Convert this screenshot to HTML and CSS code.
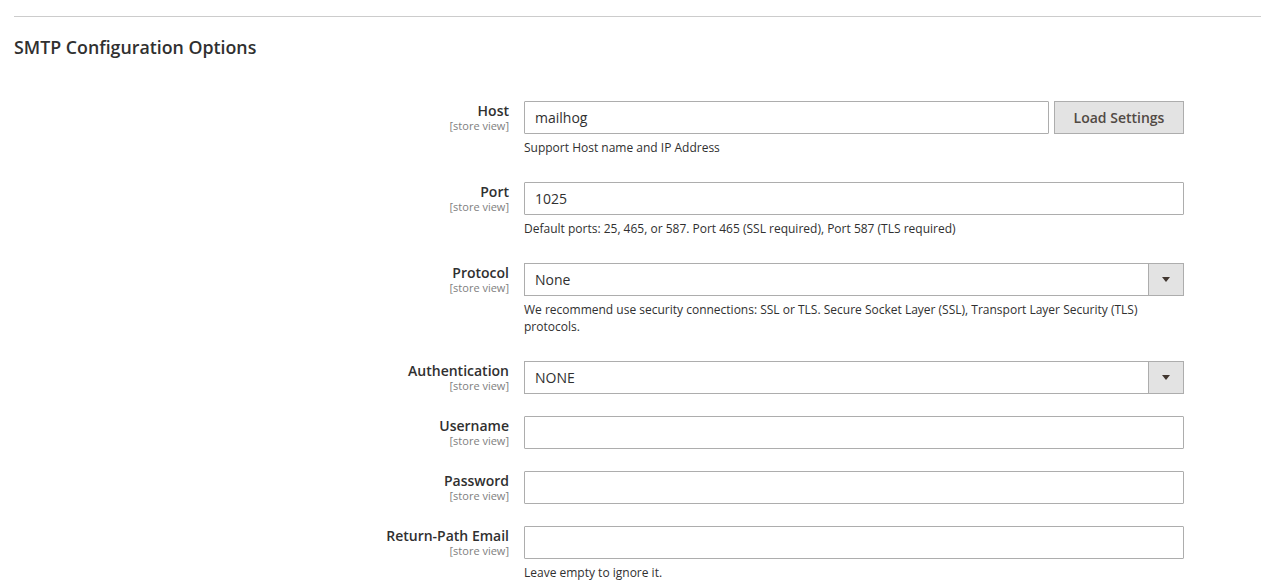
FILE: index.html
```html
<!DOCTYPE html>
<html>
<head>
<meta charset="utf-8">
<link rel="stylesheet" href="styles.css">
</head>
<body>
<div class="page">
  <div class="divider"></div>
  <h2 class="section-title">SMTP Configuration Options</h2>
  <div class="form">
    <div class="row">
      <div class="label"><span class="name">Host</span><span class="scope">[store view]</span></div>
      <div class="control">
        <div class="inline">
          <input class="input grow" type="text" value="mailhog">
          <button class="btn">Load Settings</button>
        </div>
        <p class="note">Support Host name and IP Address</p>
      </div>
    </div>
    <div class="row">
      <div class="label"><span class="name">Port</span><span class="scope">[store view]</span></div>
      <div class="control">
        <input class="input" type="text" value="1025">
        <p class="note">Default ports: 25, 465, or 587. Port 465 (SSL required), Port 587 (TLS required)</p>
      </div>
    </div>
    <div class="row">
      <div class="label"><span class="name">Protocol</span><span class="scope">[store view]</span></div>
      <div class="control">
        <div class="select"><span class="value">None</span><span class="arrow"></span></div>
        <p class="note">We recommend use security connections: SSL or TLS. Secure Socket Layer (SSL), Transport Layer Security (TLS) protocols.</p>
      </div>
    </div>
    <div class="row">
      <div class="label"><span class="name">Authentication</span><span class="scope">[store view]</span></div>
      <div class="control">
        <div class="select"><span class="value">NONE</span><span class="arrow"></span></div>
      </div>
    </div>
    <div class="row">
      <div class="label"><span class="name">Username</span><span class="scope">[store view]</span></div>
      <div class="control">
        <input class="input" type="text" value="">
      </div>
    </div>
    <div class="row">
      <div class="label"><span class="name">Password</span><span class="scope">[store view]</span></div>
      <div class="control">
        <input class="input" type="password" value="">
      </div>
    </div>
    <div class="row">
      <div class="label"><span class="name">Return-Path Email</span><span class="scope">[store view]</span></div>
      <div class="control">
        <input class="input" type="text" value="">
        <p class="note">Leave empty to ignore it.</p>
      </div>
    </div>
  </div>
</div>
</body>
</html>
```
FILE: styles.css
```css
* { box-sizing: border-box; }
html, body { margin: 0; padding: 0; background: #fff; }
body {
  font-family: "Open Sans", "Liberation Sans", sans-serif;
  color: #303030;
  overflow: hidden;
}
.page { padding: 16px 0 0 14px; }
.divider { border-top: 1px solid #cccccc; height: 0; }
.section-title {
  margin: 0;
  padding-top: 18px;
  font-size: 17.8px;
  line-height: 24px;
  font-weight: 600;
  color: #303030;
}
.form { padding-top: 42px; }
.row {
  display: grid;
  grid-template-columns: 495px 660px;
  column-gap: 15px;
  padding-bottom: 22px;
}
.label {
  display: flex;
  flex-direction: column;
  align-items: flex-end;
  text-align: right;
  padding-top: 1px;
}
.name {
  font-size: 14px;
  font-weight: 600;
  line-height: 18px;
  color: #303030;
}
.scope {
  font-size: 11px;
  line-height: 11px;
  color: #808080;
}
.control { display: flex; flex-direction: column; }
.inline { display: flex; gap: 5px; }
.input {
  display: block;
  width: 100%;
  height: 33px;
  border: 1px solid #adadad;
  border-radius: 1px;
  padding: 0 10px;
  font-family: inherit;
  font-size: 14px;
  color: #303030;
  background: #fff;
  outline: none;
}
.grow { flex: 1; width: auto; }
.btn {
  width: 130px;
  height: 33px;
  background: #e3e3e3;
  border: 1px solid #adadad;
  font-family: inherit;
  font-size: 14px;
  font-weight: 600;
  color: #514943;
  padding: 0;
}
.select {
  display: flex;
  height: 33px;
  border: 1px solid #adadad;
  background: #fff;
}
.select .value {
  flex: 1;
  padding: 0 10px;
  font-size: 14px;
  line-height: 31px;
}
.select .arrow {
  width: 35px;
  border-left: 1px solid #adadad;
  background: #e3e3e3;
  display: flex;
  align-items: center;
  justify-content: center;
}
.select .arrow::after {
  content: "";
  border-left: 4px solid transparent;
  border-right: 4px solid transparent;
  border-top: 5px solid #41362f;
}
.note {
  margin: 5px 0 0;
  font-size: 12px;
  line-height: 17px;
  color: #303030;
  padding-bottom: 4px;
  padding-right: 40px;
}
```
